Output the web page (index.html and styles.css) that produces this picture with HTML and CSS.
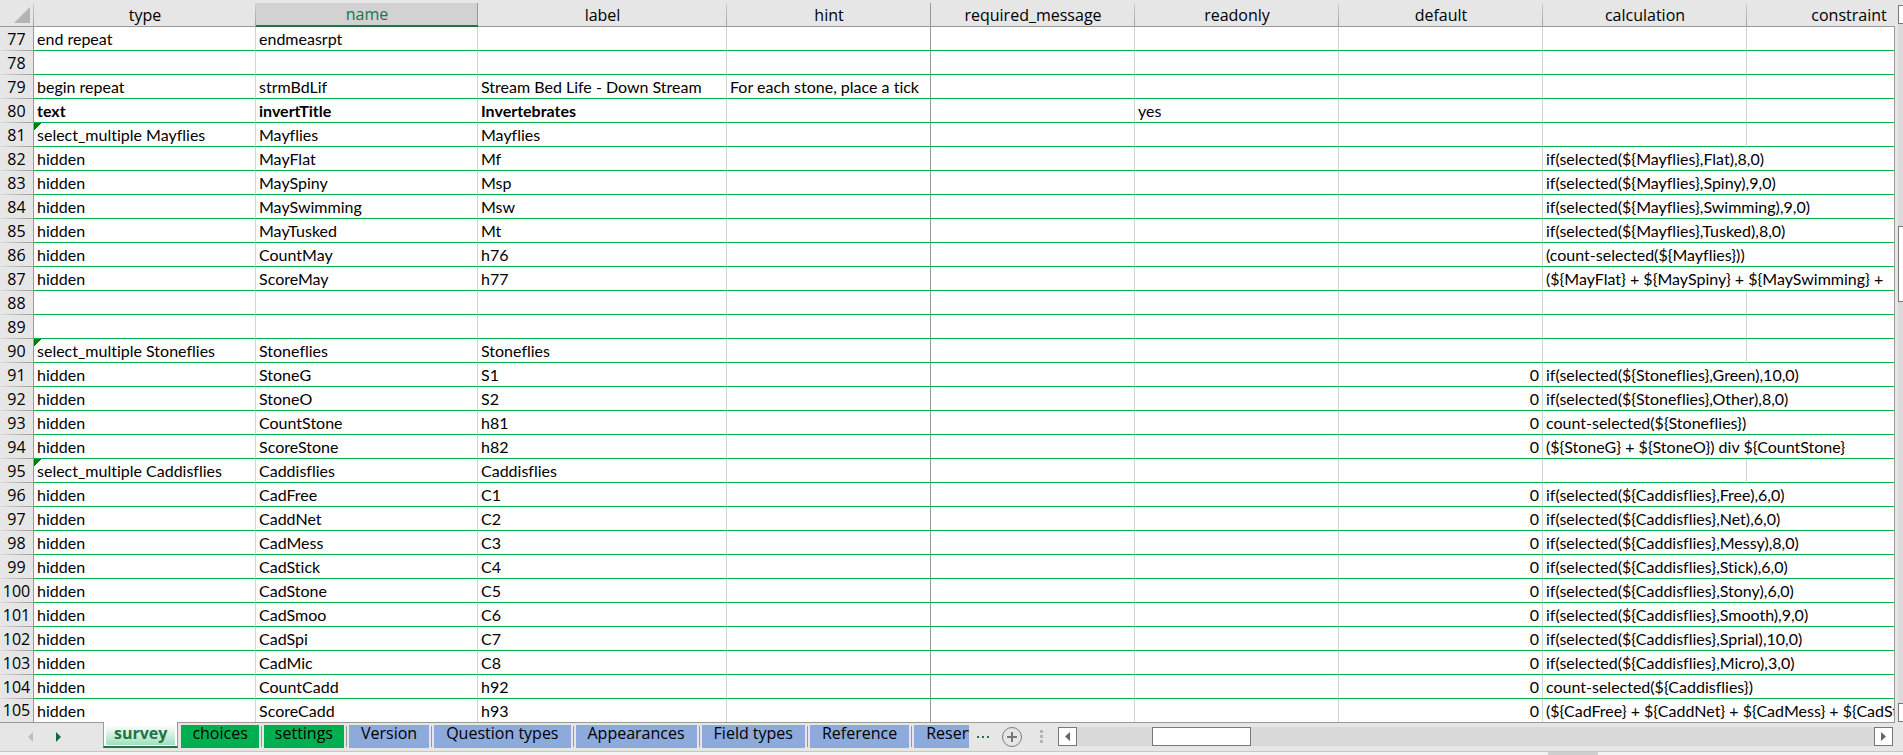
FILE: index.html
```html
<!DOCTYPE html>
<html lang="en">
<head>
    <meta charset="UTF-8">
    <meta name="viewport" content="width=device-width, initial-scale=1.0">
    <title>survey</title>
    <link rel="stylesheet" href="styles.css">
</head>
<body>
    <main class="workspace">
        <div class="sheet">
            <table class="grid">
                <colgroup>
                    <col class="col-num">
                    <col class="col-wide">
                    <col class="col-wide">
                    <col class="col-label">
                    <col class="col-std" span="6">
                </colgroup>
                <thead>
                    <tr>
                        <th class="corner"><svg width="16" height="16" viewBox="0 0 16 16"><path d="M16 0V16H0Z" fill="#b4b4b4"/></svg></th>
                        <th>type</th>
                        <th class="selected">name</th>
                        <th>label</th>
                        <th class="freeze">hint</th>
                        <th>required_message</th>
                        <th>readonly</th>
                        <th>default</th>
                        <th>calculation</th>
                        <th>constraint</th>
                    </tr>
                </thead>
                <tbody>
                    <tr><th>77</th><td>end repeat</td><td>endmeasrpt</td><td></td><td class="freeze"></td><td></td><td></td><td></td><td></td><td></td></tr>
                    <tr><th>78</th><td></td><td></td><td></td><td class="freeze"></td><td></td><td></td><td></td><td></td><td></td></tr>
                    <tr><th>79</th><td>begin repeat</td><td>strmBdLif</td><td>Stream Bed Life - Down Stream</td><td class="freeze">For each stone, place a tick</td><td></td><td></td><td></td><td></td><td></td></tr>
                    <tr><th>80</th><td class="bold">text</td><td class="bold">invertTitle</td><td class="bold">Invertebrates</td><td class="freeze"></td><td></td><td>yes</td><td></td><td></td><td></td></tr>
                    <tr><th>81</th><td class="flag">select_multiple Mayflies</td><td>Mayflies</td><td>Mayflies</td><td class="freeze"></td><td></td><td></td><td></td><td></td><td></td></tr>
                    <tr><th>82</th><td>hidden</td><td>MayFlat</td><td>Mf</td><td class="freeze"></td><td></td><td></td><td></td><td colspan="2">if(selected(${Mayflies},Flat),8,0)</td></tr>
                    <tr><th>83</th><td>hidden</td><td>MaySpiny</td><td>Msp</td><td class="freeze"></td><td></td><td></td><td></td><td colspan="2">if(selected(${Mayflies},Spiny),9,0)</td></tr>
                    <tr><th>84</th><td>hidden</td><td>MaySwimming</td><td>Msw</td><td class="freeze"></td><td></td><td></td><td></td><td colspan="2">if(selected(${Mayflies},Swimming),9,0)</td></tr>
                    <tr><th>85</th><td>hidden</td><td>MayTusked</td><td>Mt</td><td class="freeze"></td><td></td><td></td><td></td><td colspan="2">if(selected(${Mayflies},Tusked),8,0)</td></tr>
                    <tr><th>86</th><td>hidden</td><td>CountMay</td><td>h76</td><td class="freeze"></td><td></td><td></td><td></td><td colspan="2">(count-selected(${Mayflies}))</td></tr>
                    <tr><th>87</th><td>hidden</td><td>ScoreMay</td><td>h77</td><td class="freeze"></td><td></td><td></td><td></td><td colspan="2">(${MayFlat} + ${MaySpiny} + ${MaySwimming} +</td></tr>
                    <tr><th>88</th><td></td><td></td><td></td><td class="freeze"></td><td></td><td></td><td></td><td></td><td></td></tr>
                    <tr><th>89</th><td></td><td></td><td></td><td class="freeze"></td><td></td><td></td><td></td><td></td><td></td></tr>
                    <tr><th>90</th><td class="flag">select_multiple Stoneflies</td><td>Stoneflies</td><td>Stoneflies</td><td class="freeze"></td><td></td><td></td><td></td><td></td><td></td></tr>
                    <tr><th>91</th><td>hidden</td><td>StoneG</td><td>S1</td><td class="freeze"></td><td></td><td></td><td class="num">0</td><td colspan="2">if(selected(${Stoneflies},Green),10,0)</td></tr>
                    <tr><th>92</th><td>hidden</td><td>StoneO</td><td>S2</td><td class="freeze"></td><td></td><td></td><td class="num">0</td><td colspan="2">if(selected(${Stoneflies},Other),8,0)</td></tr>
                    <tr><th>93</th><td>hidden</td><td>CountStone</td><td>h81</td><td class="freeze"></td><td></td><td></td><td class="num">0</td><td colspan="2">count-selected(${Stoneflies})</td></tr>
                    <tr><th>94</th><td>hidden</td><td>ScoreStone</td><td>h82</td><td class="freeze"></td><td></td><td></td><td class="num">0</td><td colspan="2">(${StoneG} + ${StoneO}) div ${CountStone}</td></tr>
                    <tr><th>95</th><td class="flag">select_multiple Caddisflies</td><td>Caddisflies</td><td>Caddisflies</td><td class="freeze"></td><td></td><td></td><td></td><td></td><td></td></tr>
                    <tr><th>96</th><td>hidden</td><td>CadFree</td><td>C1</td><td class="freeze"></td><td></td><td></td><td class="num">0</td><td colspan="2">if(selected(${Caddisflies},Free),6,0)</td></tr>
                    <tr><th>97</th><td>hidden</td><td>CaddNet</td><td>C2</td><td class="freeze"></td><td></td><td></td><td class="num">0</td><td colspan="2">if(selected(${Caddisflies},Net),6,0)</td></tr>
                    <tr><th>98</th><td>hidden</td><td>CadMess</td><td>C3</td><td class="freeze"></td><td></td><td></td><td class="num">0</td><td colspan="2">if(selected(${Caddisflies},Messy),8,0)</td></tr>
                    <tr><th>99</th><td>hidden</td><td>CadStick</td><td>C4</td><td class="freeze"></td><td></td><td></td><td class="num">0</td><td colspan="2">if(selected(${Caddisflies},Stick),6,0)</td></tr>
                    <tr><th>100</th><td>hidden</td><td>CadStone</td><td>C5</td><td class="freeze"></td><td></td><td></td><td class="num">0</td><td colspan="2">if(selected(${Caddisflies},Stony),6,0)</td></tr>
                    <tr><th>101</th><td>hidden</td><td>CadSmoo</td><td>C6</td><td class="freeze"></td><td></td><td></td><td class="num">0</td><td colspan="2">if(selected(${Caddisflies},Smooth),9,0)</td></tr>
                    <tr><th>102</th><td>hidden</td><td>CadSpi</td><td>C7</td><td class="freeze"></td><td></td><td></td><td class="num">0</td><td colspan="2">if(selected(${Caddisflies},Sprial),10,0)</td></tr>
                    <tr><th>103</th><td>hidden</td><td>CadMic</td><td>C8</td><td class="freeze"></td><td></td><td></td><td class="num">0</td><td colspan="2">if(selected(${Caddisflies},Micro),3,0)</td></tr>
                    <tr><th>104</th><td>hidden</td><td>CountCadd</td><td>h92</td><td class="freeze"></td><td></td><td></td><td class="num">0</td><td colspan="2">count-selected(${Caddisflies})</td></tr>
                    <tr><th>105</th><td>hidden</td><td>ScoreCadd</td><td>h93</td><td class="freeze"></td><td></td><td></td><td class="num">0</td><td colspan="2">(${CadFree} + ${CaddNet} + ${CadMess} + ${CadStick})</td></tr>
                </tbody>
            </table>
        </div>
        <div class="v-scroll">
            <button class="v-btn" aria-label="Scroll up"></button>
            <div class="v-track"><div class="v-thumb"></div></div>
            <button class="v-btn" aria-label="Scroll down"></button>
        </div>
    </main>

    <footer class="bottom-bar">
        <div class="tab-area">
            <div class="tab-nav">
                <button aria-label="Previous sheet"><svg width="6" height="10" viewBox="0 0 6 10"><path d="M5 0V10L0 5Z" fill="#bdbdbd"/></svg></button>
                <button aria-label="Next sheet"><svg width="6" height="10" viewBox="0 0 6 10"><path d="M0 0V10L5 5Z" fill="#0e6b3a"/></svg></button>
            </div>
            <div class="tabs">
                <button class="tab active"><span>survey</span></button>
                <button class="tab green">choices</button>
                <button class="tab green">settings</button>
                <button class="tab">Version</button>
                <button class="tab">Question types</button>
                <button class="tab">Appearances</button>
                <button class="tab">Field types</button>
                <button class="tab">Reference</button>
                <button class="tab">Reserved</button>
            </div>
            <button class="more" aria-label="More sheets"><svg width="14" height="4" viewBox="0 0 14 4"><path d="M1 1h2v2H1zM6 1h2v2H6zM11 1h2v2H11z" fill="#217346"/></svg></button>
            <button class="add" aria-label="New sheet"><svg width="22" height="22" viewBox="0 0 22 22"><circle cx="11" cy="11" r="9.5" fill="none" stroke="#7a7a7a"/><path d="M10 6h2v4h4v2h-4v4h-2v-4H6v-2h4z" fill="#777"/></svg></button>
            <svg class="grip" width="3" height="13" viewBox="0 0 3 13"><path d="M0 0h3v3H0zM0 5h3v3H0zM0 10h3v3H0z" fill="#b5b5b5"/></svg>
        </div>
        <div class="h-scroll">
            <button class="h-btn" aria-label="Scroll left"><svg width="5" height="9" viewBox="0 0 5 9"><path d="M5 0V9L0 4.500Z" fill="#666"/></svg></button>
            <div class="h-track"><div class="h-thumb"></div></div>
            <button class="h-btn" aria-label="Scroll right"><svg width="5" height="9" viewBox="0 0 5 9"><path d="M0 0V9L5 4.500Z" fill="#666"/></svg></button>
        </div>
    </footer>
    <div class="status-bar"><div class="view-mode"></div></div>
</body>
</html>
```

FILE: styles.css
```css
* {
    margin: 0;
    padding: 0;
    box-sizing: border-box;
}

body {
    display: flex;
    flex-direction: column;
    height: 100vh;
    overflow: hidden;
    background: #e6e6e6;
    color: #000;
    font-family: "Open Sans", "Noto Sans", sans-serif;
    font-size: 16px;
}

button {
    border: none;
    background: none;
    font: inherit;
    color: inherit;
}

svg {
    display: block;
}

.workspace {
    display: flex;
    overflow: hidden;
}

/* sheet grid */
.sheet {
    flex: 1;
    min-width: 0;
    padding-right: 1px;
    background: linear-gradient(#999, #999) no-repeat;
    background-size: 1px 100%;
    background-position: right 0 top 26px;
    overflow: clip;
    overflow-clip-margin: content-box;
}

.grid {
    table-layout: fixed;
    width: 1951px;
    border-collapse: separate;
    border-spacing: 0;
}

.col-num {
    width: 34px;
}

.col-wide {
    width: 222px;
}

.col-label {
    width: 249px;
}

.col-std {
    width: 204px;
}

.grid th {
    font-weight: normal;
    text-align: center;
    background: #e6e6e6;
    white-space: nowrap;
}

.grid thead th {
    height: 27px;
    padding-top: 4px;
    line-height: 22px;
    border-bottom: 1px solid #999;
    background: linear-gradient(#d0d0d0, #999) right 3px / 1px 100% no-repeat #e6e6e6;
}

.grid thead th.selected {
    color: #217346;
    border-bottom: 2px solid #217346;
    line-height: 21px;
    background: linear-gradient(#e6e6e6, #e6e6e6) 0 0 / 100% 3px no-repeat, linear-gradient(#999, #999) right / 1px 100% no-repeat #d2d2d2;
}

.grid thead th.freeze {
    background: linear-gradient(#999, #999) right 3px / 1px 100% no-repeat #e6e6e6;
}

.grid thead th.corner {
    padding-left: 14px;
}

.grid tbody th {
    height: 24px;
    line-height: 23px;
    border-right: 1px solid #999;
    background: linear-gradient(90deg, #dcdcdc, #999) bottom / 100% 1px no-repeat #e6e6e6;
}

.grid td {
    height: 24px;
    padding: 1px 3px 0;
    line-height: 22px;
    font-family: Lato, sans-serif;
    font-variant-ligatures: none;
    background: #fff;
    border-right: 1px solid #d4d4d4;
    border-bottom: 1px solid #00b050;
    white-space: nowrap;
    overflow: hidden;
}

.grid td.freeze {
    border-right-color: #999;
}

.grid td.bold {
    font-weight: bold;
}

.grid td.num {
    text-align: right;
}

.grid td.flag {
    background: linear-gradient(135deg, #008000 5px, #fff 5px);
}

/* the last row ends on the line of the tab bar */
.grid tbody tr:last-child th,
.grid tbody tr:last-child td {
    height: 23px;
    border-bottom: none;
}

.grid tbody tr:last-child th {
    background: #e6e6e6;
}

/* vertical scrollbar */
.v-scroll {
    flex: 0 0 8px;
    display: flex;
    flex-direction: column;
    padding: 5px 0 0 3px;
    overflow: hidden;
}

.v-btn {
    flex: none;
    width: 19px;
    height: 19px;
    border: 1px solid #777;
    background: #fff;
}

.v-track {
    flex: 1;
    width: 19px;
    background: #dadada;
}

.v-thumb {
    height: 76px;
    margin-top: 202px;
    border: 1px solid #777;
    background: #fff;
}

/* sheet tabs */
.bottom-bar {
    display: flex;
    flex: none;
    height: 29px;
    background: linear-gradient(#999, #999) 0 0 / calc(100% - 8px) 1px no-repeat;
}

.tab-area {
    flex: 0 0 55%;
    display: flex;
    align-items: center;
    min-width: 0;
}

.tab-nav {
    flex: 0 0 103px;
    display: flex;
    gap: 22px;
    padding-left: 28px;
}

.tabs {
    flex: 1;
    min-width: 0;
    display: flex;
    align-self: stretch;
    gap: 5px;
    overflow: hidden;
}

.tab {
    position: relative;
    flex: none;
    display: flex;
    height: 23px;
    margin-top: 3px;
    padding: 0 12px;
    line-height: 16px;
    background: #8ea9db;
}

.tab.green {
    padding: 0 11px;
    background: #00b050;
}

.tab + .tab:not(.green)::before,
.tab.green + .tab.green::before {
    content: "";
    position: absolute;
    left: -3px;
    top: 1px;
    width: 1px;
    height: 21px;
    background: #999;
}

.tab.active {
    height: 26px;
    margin: 0 -2px 0 0;
    padding: 3px 2px 1px;
    color: #217346;
    font-weight: bold;
    background: #fff;
    border-left: 1px solid #999;
    border-right: 1px solid #999;
    border-bottom: 2px solid #217346;
}

.tab.active span {
    height: 20px;
    padding: 0 8px;
    background: linear-gradient(#fff, #9fe0bc);
}

.more {
    margin-left: 7px;
}

.add {
    margin-left: 11px;
}

.grip {
    margin: 0 4px 0 17px;
}

/* horizontal scrollbar */
.h-scroll {
    flex: 1;
    display: flex;
    padding: 5px 10px 5px 11px;
}

.h-btn {
    flex: 0 0 19px;
    display: flex;
    align-items: center;
    justify-content: center;
    border: 1px solid #777;
    background: #fff;
}

.h-track {
    flex: 1;
    background: #dadada;
}

.h-thumb {
    width: 99px;
    height: 100%;
    margin-left: 75px;
    border: 1px solid #777;
    background: #fff;
}

.status-bar {
    flex: 1;
    border-top: 1px solid #c8c6c0;
    background: #f3f3f3;
}

.view-mode {
    width: 50px;
    height: 100%;
    margin-left: auto;
    margin-right: 305px;
    background: #cfcfcf;
}
```
